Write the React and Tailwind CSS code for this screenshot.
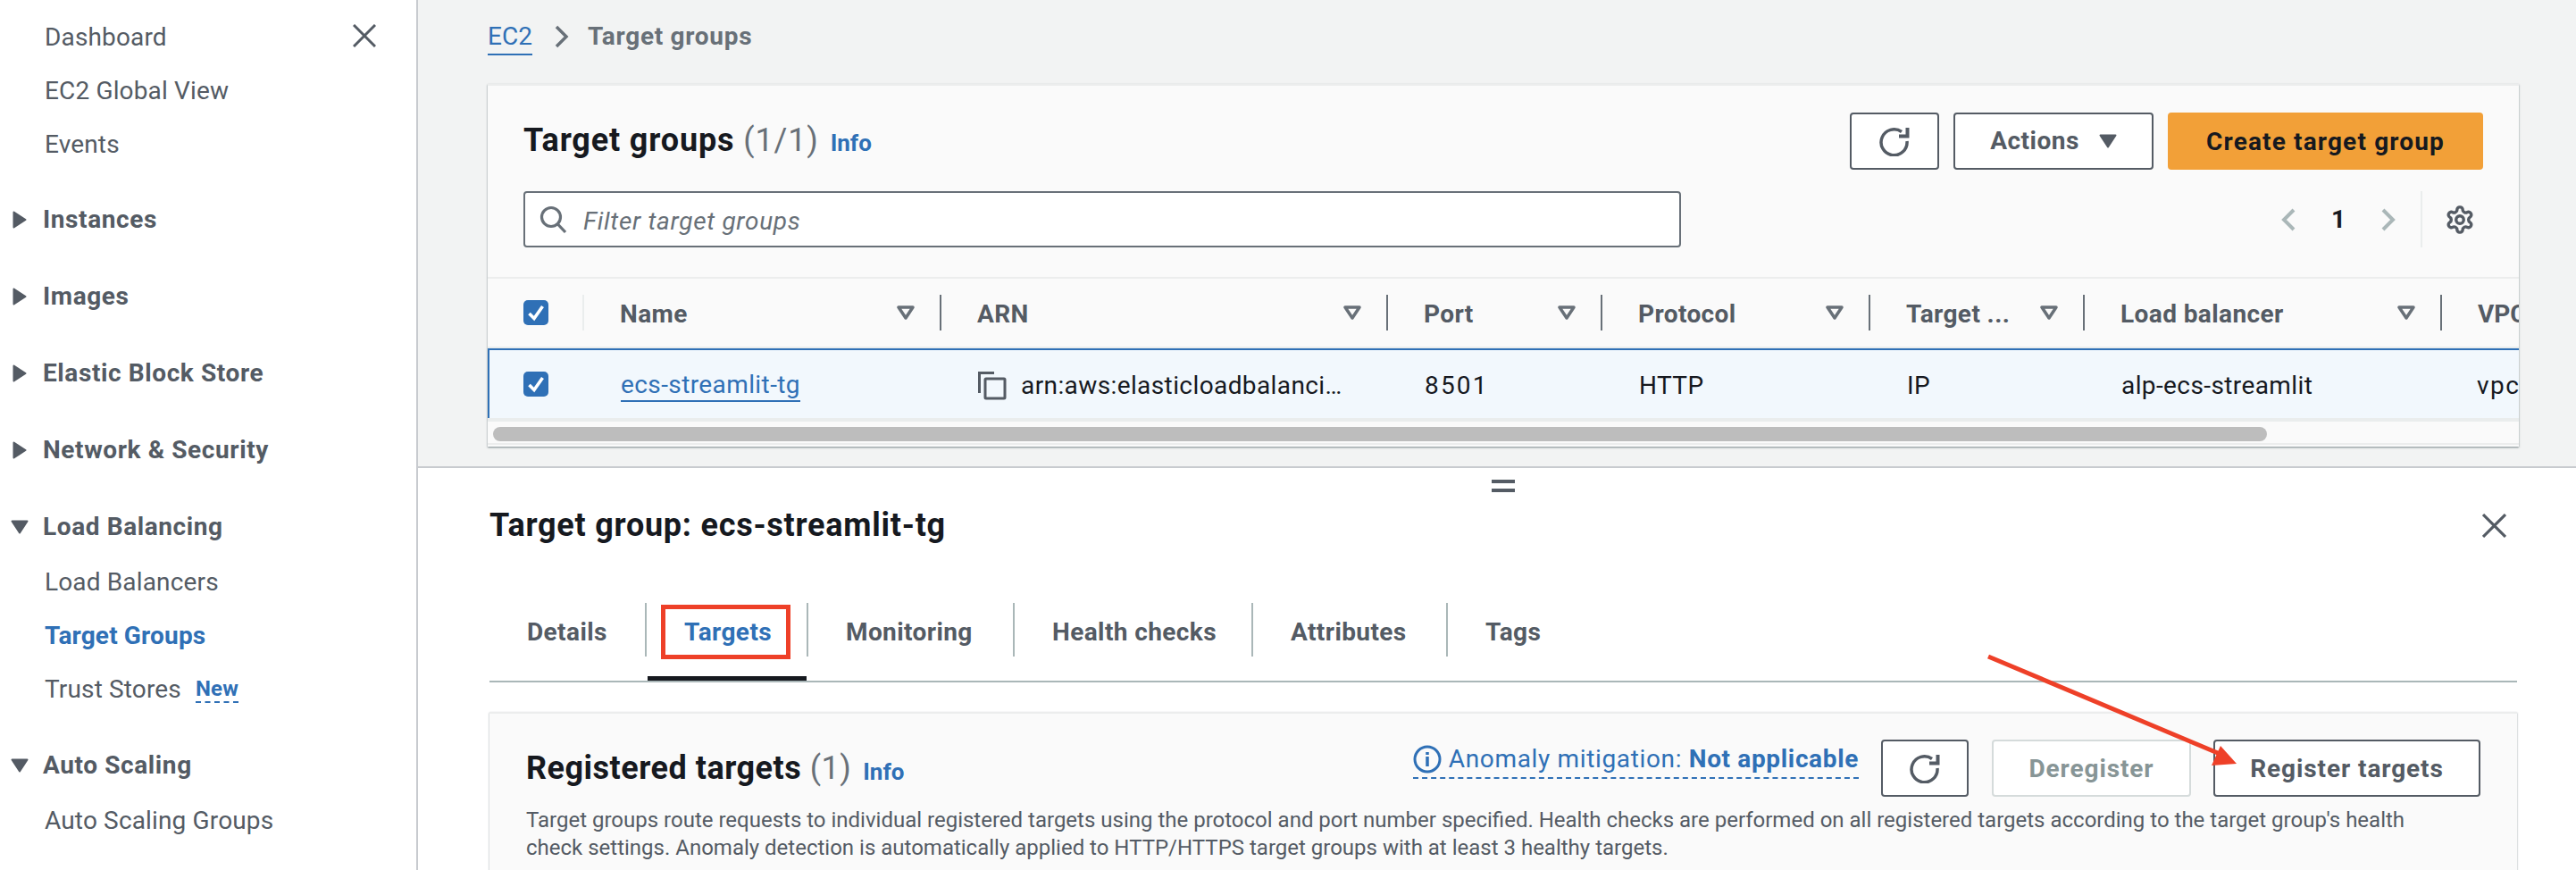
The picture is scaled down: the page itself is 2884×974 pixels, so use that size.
import React from "react";

function CaretRight() {
  return (
    <svg width="16" height="20" viewBox="0 0 16 20" className="ml-[14px] mr-[18px] shrink-0">
      <path d="M1.5 1.5 L14.5 10 L1.5 18.5 Z" fill="#545b64" stroke="#545b64" strokeWidth="2" strokeLinejoin="round" />
    </svg>
  );
}
function CaretDown() {
  return (
    <svg width="20" height="16" viewBox="0 0 20 16" className="ml-[12px] mr-[16px] shrink-0">
      <path d="M1.5 1.5 L18.5 1.5 L10 14.5 Z" fill="#545b64" stroke="#545b64" strokeWidth="2" strokeLinejoin="round" />
    </svg>
  );
}
function Close({ size }) {
  return (
    <svg width={size} height={size} viewBox="0 0 26 26" fill="none" stroke="#545b64" strokeWidth="3">
      <path d="M1 1 L25 25 M25 1 L1 25" />
    </svg>
  );
}
function NavItem({ children, className = "text-[#545b64]" }) {
  return <div className={`h-[60px] flex items-center pl-[50px] text-[28px] tracking-[0.15px] ${className}`}>{children}</div>;
}
function NavHead({ open, children, className = "mt-[26px]" }) {
  return (
    <div className={`h-[60px] flex items-center text-[28px] font-bold tracking-[0.6px] text-[#545b64] ${className}`}>
      {open ? <CaretDown /> : <CaretRight />}
      <span>{children}</span>
    </div>
  );
}
function Refresh() {
  return (
    <svg width="34" height="34" viewBox="0 0 34 34" fill="none" stroke="#545b64" strokeWidth="3.5">
      <path d="M25 6.5 A14.5 14.5 0 1 0 31 17" />
      <path d="M31.5 2 V11.5 H22" strokeWidth="4" />
    </svg>
  );
}
function Check() {
  return (
    <div className="w-[28px] h-[28px] rounded-[5px] bg-[#2f70b6] flex items-center justify-center">
      <svg width="22" height="22" viewBox="0 0 22 22" fill="none" stroke="#fff" strokeWidth="3.6">
        <path d="M3.5 12 L9 17.5 L18.5 4" />
      </svg>
    </div>
  );
}
function SortIcon() {
  return (
    <svg width="20" height="16" viewBox="0 0 20 16" fill="none" stroke="#687078" strokeWidth="3.5" className="mr-[28px] shrink-0" strokeLinejoin="round">
      <path d="M2 2 H18 L10 14 Z" />
    </svg>
  );
}
function HeadCell({ label }) {
  return (
    <div className="h-[76px] flex items-center pl-[40px]">
      <span className="flex-1 pt-[3px] text-[28px] font-bold tracking-[0.4px] text-[#545b64] whitespace-nowrap">{label}</span>
      <SortIcon />
      <span className="w-[2px] h-[40px] bg-[#687078] shrink-0" />
    </div>
  );
}
const Cols = "grid grid-cols-[108px_400px_500px_240px_300px_240px_400px_200px]";

function Cell({ children }) {
  return <div className="h-[76px] flex items-center pl-[41px] pt-[3px] text-[28px] tracking-[0.4px] text-[#16191f] whitespace-nowrap overflow-hidden">{children}</div>;
}
function Tab({ w, children, active, last }) {
  return (
    <div className={`relative h-[87px] ${w}`}>
      <div className={`h-[60px] flex items-center pl-[42px] pt-[5px] text-[28px] font-bold tracking-[0.4px] ${active ? "text-[#2f70b6]" : "text-[#545b64]"} ${last ? "" : "border-r-2 border-[#aab7b8]"}`}>
        {children}
      </div>
      {active && <div className="absolute left-[1px] right-[2px] bottom-0 h-[5px] bg-[#16191f]" />}
      {active && <div className="absolute left-[16px] top-[2px] w-[145px] h-[61px] border-[5px] border-[#ee4028]" />}
    </div>
  );
}

export default function App() {
  return (
    <div className="relative flex w-[2884px] h-[974px] overflow-hidden bg-white [font-family:Roboto,sans-serif]">
      {/* Sidebar */}
      <aside className="relative w-[468px] shrink-0 border-r-2 border-[#c8cbcf] pt-[12px] bg-white">
        <div className="absolute left-[395px] top-[27px]"><Close size={26} /></div>
        <NavItem>Dashboard</NavItem>
        <NavItem>EC2 Global View</NavItem>
        <NavItem>Events</NavItem>
        <NavHead className="mt-[24px]">Instances</NavHead>
        <NavHead>Images</NavHead>
        <NavHead>Elastic Block Store</NavHead>
        <NavHead>Network &amp; Security</NavHead>
        <NavHead open>Load Balancing</NavHead>
        <div className="mt-[2px]">
          <NavItem>Load Balancers</NavItem>
          <NavItem className="font-bold tracking-[0.6px] text-[#2f70b6]">Target Groups</NavItem>
          <NavItem>
            <span>Trust Stores</span>
            <span className="ml-[16px] text-[24px] font-bold text-[#2f70b6] border-b-2 border-dashed border-[#2f70b6] leading-[28px]">New</span>
          </NavItem>
        </div>
        <NavHead open className="mt-[25px]">Auto Scaling</NavHead>
        <div className="mt-[2px]">
          <NavItem>Auto Scaling Groups</NavItem>
        </div>
      </aside>

      {/* Main */}
      <main className="relative flex-1 min-w-0 flex flex-col">
        {/* Top */}
        <section className="h-[524px] shrink-0 bg-[#f2f3f3] border-b-2 border-[#c8cbcf] pl-[78px] pr-[64px]">
          <div className="h-[94px] flex items-start pt-[22px] text-[28px] font-bold">
            <span className="h-[40px] leading-[38px] font-normal text-[#2f70b6] border-b-2 border-[#2f70b6]">EC2</span>
            <svg width="18" height="26" viewBox="0 0 18 26" fill="none" stroke="#687078" strokeWidth="3.5" className="ml-[24px] mr-[20px] mt-[6px]">
              <path d="M3 2 L14 13 L3 24" />
            </svg>
            <span className="leading-[38px] tracking-[0.7px] text-[#687078]">Target groups</span>
          </div>

          <div className="h-[406px] bg-[#fafafa] border-t-2 border-[#eceded] shadow-[0_1px_2px_rgba(0,28,36,0.5)] overflow-hidden">
            <div className="h-[64px] mt-[30px] pl-[40px] pr-[40px] flex items-center">
              <h1 className="mt-[-2px] text-[36px] font-bold tracking-[0.85px] text-[#16191f] whitespace-nowrap">Target groups <span className="font-normal text-[#687078]">(1/1)</span></h1>
              <span className="ml-[13px] mt-[5px] text-[26px] font-bold text-[#2f70b6]">Info</span>
              <div className="ml-auto flex gap-[16px]">
                <button className="w-[100px] h-[64px] flex items-center justify-center bg-white border-2 border-[#545b64] rounded-[4px]"><Refresh /></button>
                <button className="w-[224px] h-[64px] flex items-center justify-center gap-[22px] bg-white border-2 border-[#545b64] rounded-[4px] text-[28px] font-bold tracking-[0.5px] text-[#545b64]">
                  Actions
                  <svg width="20" height="16" viewBox="0 0 20 16"><path d="M1.5 1.5 L18.5 1.5 L10 14.5 Z" fill="#545b64" stroke="#545b64" strokeWidth="2" strokeLinejoin="round" /></svg>
                </button>
                <button className="w-[353px] h-[64px] pt-[1px] bg-[#f2a038] rounded-[4px] text-[28px] font-bold tracking-[1.15px] text-[#16191f]">Create target group</button>
              </div>
            </div>

            <div className="h-[63px] mt-[24px] pl-[40px] flex items-center">
              <div className="w-[1296px] h-[63px] flex items-center bg-white border-2 border-[#687078] rounded-[4px] pl-[16px]">
                <svg width="32" height="32" viewBox="0 0 32 32" fill="none" stroke="#687078" strokeWidth="3.2">
                  <circle cx="13" cy="13" r="10.5" />
                  <path d="M20.5 21 L29 30" />
                </svg>
                <span className="ml-[17px] pt-[4px] text-[28px] italic tracking-[0.7px] text-[#687078]">Filter target groups</span>
              </div>
              <svg width="16" height="26" viewBox="0 0 16 26" fill="none" stroke="#aab7b8" strokeWidth="4" className="ml-[672px]"><path d="M14 2 L3 13 L14 24" /></svg>
              <span className="w-[96px] text-center text-[28px] font-bold text-[#16191f]">1</span>
              <svg width="16" height="26" viewBox="0 0 16 26" fill="none" stroke="#aab7b8" strokeWidth="4"><path d="M2 2 L13 13 L2 24" /></svg>
              <span className="ml-[28px] w-[2px] h-[63px] bg-[#eaeded]" />
              <svg width="34" height="34" viewBox="0 0 24 24" fill="none" stroke="#545b64" strokeWidth="2.4" strokeLinecap="round" strokeLinejoin="round" className="ml-[25px]">
                <path d="M12.22 2h-.44a2 2 0 0 0-2 2v.18a2 2 0 0 1-1 1.73l-.43.25a2 2 0 0 1-2 0l-.15-.08a2 2 0 0 0-2.73.73l-.22.38a2 2 0 0 0 .73 2.73l.15.1a2 2 0 0 1 1 1.72v.51a2 2 0 0 1-1 1.74l-.15.09a2 2 0 0 0-.73 2.73l.22.38a2 2 0 0 0 2.73.73l.15-.08a2 2 0 0 1 2 0l.43.25a2 2 0 0 1 1 1.73V20a2 2 0 0 0 2 2h.44a2 2 0 0 0 2-2v-.18a2 2 0 0 1 1-1.73l.43-.25a2 2 0 0 1 2 0l.15.08a2 2 0 0 0 2.73-.73l.22-.39a2 2 0 0 0-.73-2.73l-.15-.08a2 2 0 0 1-1-1.74v-.5a2 2 0 0 1 1-1.74l.15-.09a2 2 0 0 0 .73-2.73l-.22-.38a2 2 0 0 0-2.73-.73l-.15.08a2 2 0 0 1-2 0l-.43-.25a2 2 0 0 1-1-1.73V4a2 2 0 0 0-2-2z" />
                <circle cx="12" cy="12" r="3" />
              </svg>
            </div>

            <div className="mt-[33px] border-t-2 border-[#eceded]">
              <div className={`${Cols} border-b-2 border-[#eaeded]`}>
                <div className="h-[76px] flex items-center pl-[40px]">
                  <Check />
                  <span className="ml-auto w-[2px] h-[40px] bg-[#eaeded]" />
                </div>
                <HeadCell label="Name" />
                <HeadCell label="ARN" />
                <HeadCell label="Port" />
                <HeadCell label="Protocol" />
                <HeadCell label="Target ..." />
                <HeadCell label="Load balancer" />
                <div className="h-[76px] flex items-center pl-[40px] pt-[3px] text-[28px] font-bold text-[#545b64]">VPC ID</div>
              </div>
              <div className={`${Cols} bg-[#f2f8fd] border-t-2 border-[#2f70b6] border-b-4 border-b-[#eaeded] h-[82px]`}>
                <div className="h-[76px] flex items-center pl-[38px] border-l-2 border-[#2f70b6]"><Check /></div>
                <Cell><span className="text-[#2f70b6] border-b-2 border-[#2f70b6] leading-[34px]">ecs-streamlit-tg</span></Cell>
                <Cell>
                  <svg width="32" height="32" viewBox="0 0 32 32" fill="none" stroke="#545b64" strokeWidth="3" className="mr-[16px] shrink-0">
                    <path d="M1.5 24 V1.5 H18" />
                    <rect x="8" y="8" width="22" height="22" rx="1" />
                  </svg>
                  <span>arn:aws:elasticloadbalanci…</span>
                </Cell>
                <Cell><span className="tracking-[2.2px]">8501</span></Cell>
                <Cell>HTTP</Cell>
                <Cell>IP</Cell>
                <Cell>alp-ecs-streamlit</Cell>
                <Cell><span className="-ml-[2px] tracking-[1.5px]">vpc-0a1b2c3d</span></Cell>
              </div>
              <div className="h-[26px] pt-[6px] px-[6px] border-b-2 border-[#eceded]">
                <div className="w-[1986px] h-[16px] rounded-full bg-[#bdbdbd]" />
              </div>
            </div>
          </div>
        </section>

        {/* Drag handle */}
        <div className="absolute left-[1202px] top-[537px] w-[26px] h-[14px] flex flex-col justify-between">
          <span className="h-[4px] bg-[#545b64]" />
          <span className="h-[4px] bg-[#545b64]" />
        </div>

        {/* Bottom */}
        <section className="flex-1 pl-[80px] pr-[66px] pt-[44px]">
          <div className="h-[40px] flex items-center justify-between pr-[12px]">
            <h2 className="text-[36px] font-bold tracking-[0.75px] text-[#16191f]">Target group: ecs-streamlit-tg</h2>
            <Close size={27} />
          </div>
          <div className="mt-[67px] flex border-b-2 border-[#aab7b8] h-[89px]">
            <Tab w="w-[176px]">Details</Tab>
            <Tab w="w-[181px]" active>Targets</Tab>
            <Tab w="w-[231px]">Monitoring</Tab>
            <Tab w="w-[267px]">Health checks</Tab>
            <Tab w="w-[218px]">Attributes</Tab>
            <Tab w="w-[120px]" last>Tags</Tab>
          </div>
          <div className="mt-[33px] bg-[#fafafa] border-t-2 border-[#eceded] shadow-[0_1px_2px_rgba(0,28,36,0.4)] h-[200px] pl-[41px] pr-[41px] pt-[29px]">
            <div className="flex items-start h-[64px]">
              <h3 className="mt-[5px] text-[36px] font-bold tracking-[0.5px] text-[#16191f] whitespace-nowrap">Registered targets <span className="font-normal text-[#687078]">(1)</span></h3>
              <span className="ml-[13px] mt-[17px] text-[26px] font-bold text-[#2f70b6]">Info</span>
              <div className="ml-auto flex items-start">
                <div className="flex items-center h-[44px] pt-[1px] border-b-2 border-dashed border-[#2f70b6] text-[28px] tracking-[0.65px] text-[#2f70b6] mr-[25px] whitespace-nowrap">
                  <svg width="32" height="32" viewBox="0 0 32 32" fill="none" stroke="#2f70b6" strokeWidth="3" className="mr-[8px]">
                    <circle cx="16" cy="16" r="14" />
                    <path d="M16 13 V24 M16 8 V11" strokeWidth="3.5" />
                  </svg>
                  Anomaly mitigation:&nbsp;<b>Not applicable</b>
                </div>
                <button className="w-[98px] h-[64px] flex items-center justify-center bg-white border-2 border-[#545b64] rounded-[4px]"><Refresh /></button>
                <button className="ml-[26px] w-[223px] h-[64px] pt-[2px] bg-white border-2 border-[#d5dbdb] rounded-[4px] text-[28px] font-bold tracking-[0.9px] text-[#879596]">Deregister</button>
                <button className="ml-[25px] w-[299px] h-[64px] pt-[2px] bg-white border-2 border-[#545b64] rounded-[4px] text-[28px] font-bold tracking-[0.9px] text-[#545b64]">Register targets</button>
              </div>
            </div>
            <p className="mt-[11px] text-[24px] leading-[31px] text-[#545b64] whitespace-nowrap">
              Target groups route requests to individual registered targets using the protocol and port number specified. Health checks are performed on all registered targets according to the target group's health<br />
              check settings. Anomaly detection is automatically applied to HTTP/HTTPS target groups with at least 3 healthy targets.
            </p>
          </div>
        </section>
      </main>

      {/* Annotation arrow */}
      <svg className="absolute left-[2220px] top-[730px] pointer-events-none" width="290" height="130" viewBox="2220 730 290 130">
        <path d="M2226 735 L2490 846" stroke="#ee4028" strokeWidth="5" fill="none" />
        <path d="M2486 835 L2504 855 L2476 857 Z" fill="#ee4028" />
      </svg>
    </div>
  );
}
